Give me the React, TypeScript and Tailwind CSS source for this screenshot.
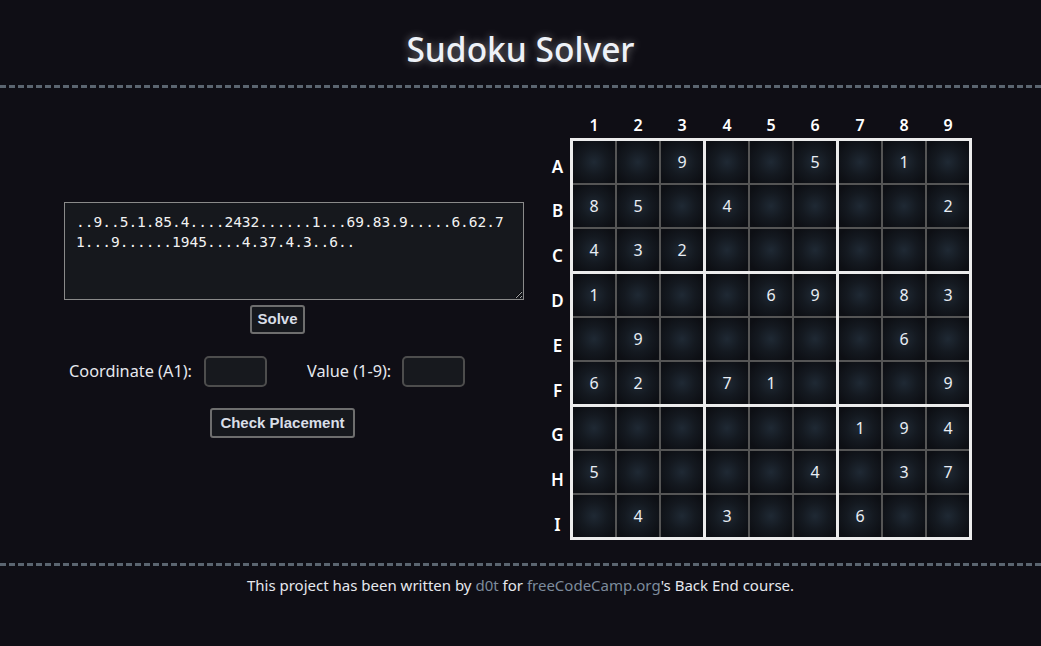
const puzzle =
  "..9..5.1.85.4....2432......1...69.83.9.....6.62.71...9......1945....4.37.4.3..6..";

const rows = ["A", "B", "C", "D", "E", "F", "G", "H", "I"];
const cols = ["1", "2", "3", "4", "5", "6", "7", "8", "9"];

const sans = "font-['Noto_Sans',sans-serif]";

function Dashes() {
  return <div className="h-[3px] w-full bg-[repeating-linear-gradient(90deg,#5b6570_0px,#5b6570_6px,transparent_6px,transparent_9px)]" />;
}

function Box({ br, bc }: { br: number; bc: number }) {
  const cells = [];
  for (let r = 0; r < 3; r++) {
    for (let c = 0; c < 3; c++) {
      const row = br * 3 + r;
      const col = bc * 3 + c;
      const ch = puzzle[row * 9 + col];
      cells.push(
        <div
          key={`${r}-${c}`}
          className="flex h-[42px] w-[42px] items-center justify-center bg-[radial-gradient(circle,#1f2934_0%,#141920_45%,#0d0f14_85%)] text-[16px] text-[#e9eef5]"
        >
          {ch === "." ? "" : ch}
        </div>
      );
    }
  }
  return <div className="grid grid-cols-3 gap-[2px] bg-[#555]">{cells}</div>;
}

function Board() {
  return (
    <div className="grid grid-cols-3 gap-[3px] bg-[#ececec] p-[3px]">
      {[0, 1, 2].map((br) => [0, 1, 2].map((bc) => <Box key={`${br}${bc}`} br={br} bc={bc} />))}
    </div>
  );
}

export default function App() {
  return (
    <div className={`min-h-screen bg-[#0f0e15] text-[#e6e8ee] ${sans}`}>
      <header className="flex h-[85px] items-center justify-center pt-[14px]">
        <h1 className="text-[33.5px] font-medium text-[#eef2f8] [text-shadow:0_0_8px_rgba(255,255,255,0.45)]">
          Sudoku Solver
        </h1>
      </header>
      <Dashes />

      <main className="flex h-[475px]">
        <div className="ml-[64px] w-[460px] pt-[114px]">
          <textarea
            readOnly
            spellCheck={false}
            value={puzzle}
            className="block h-[98px] w-[460px] border border-[#8a8a8a] bg-[#16181d] pl-[11px] pr-[14px] pt-[9px] font-['DejaVu_Sans_Mono',monospace] text-[14.5px] leading-[20px] text-[#f2f2f2] outline-none"
          />
          <button className="ml-[186px] mt-[5px] h-[29px] w-[55px] rounded-[3px] border-2 border-[#6e6e6e] bg-[#16181d] font-['Liberation_Sans',sans-serif] text-[15px] font-bold text-[#d9dee7]">
            Solve
          </button>
          <div className="mt-[22px] flex items-center pl-[5px] text-[16.3px]">
            <span>Coordinate (A1):</span>
            <div className="ml-[12px] h-[31px] w-[63px] rounded-[5px] border-2 border-[#4d4d4d] bg-[#17191e]" />
            <span className="ml-[40px]">Value (1-9):</span>
            <div className="ml-[11px] h-[31px] w-[63px] rounded-[5px] border-2 border-[#4d4d4d] bg-[#17191e]" />
          </div>
          <button className="ml-[146px] mt-[21px] h-[30px] w-[145px] rounded-[3px] border-2 border-[#6e6e6e] bg-[#16181d] font-['Liberation_Sans',sans-serif] text-[15px] font-bold text-[#d9dee7]">
            Check Placement
          </button>
        </div>

        <div className="ml-[21px] flex pt-[24px]">
          <div className="flex w-[25px] flex-col pt-[32px] text-[17px] font-semibold text-white">
            {rows.map((r) => (
              <div key={r} className="flex h-[44.8px] items-center justify-center">
                {r}
              </div>
            ))}
          </div>
          <div>
            <div className="flex h-[26px] items-center pl-[3px] text-[16px] font-semibold text-white">
              {cols.map((c, i) => (
                <div
                  key={c}
                  className={`w-[42px] text-center ${i === 3 || i === 6 ? "ml-[3px]" : i > 0 ? "ml-[2px]" : ""}`}
                >
                  {c}
                </div>
              ))}
            </div>
            <Board />
          </div>
        </div>
      </main>

      <Dashes />
      <footer className="pt-[8px] text-center text-[15px] text-[#e6e8ee]">
        This project has been written by <span className="text-[#7d8b9c]">d0t</span> for{" "}
        <span className="text-[#7d8b9c]">freeCodeCamp.org</span>'s Back End course.
      </footer>
    </div>
  );
}
